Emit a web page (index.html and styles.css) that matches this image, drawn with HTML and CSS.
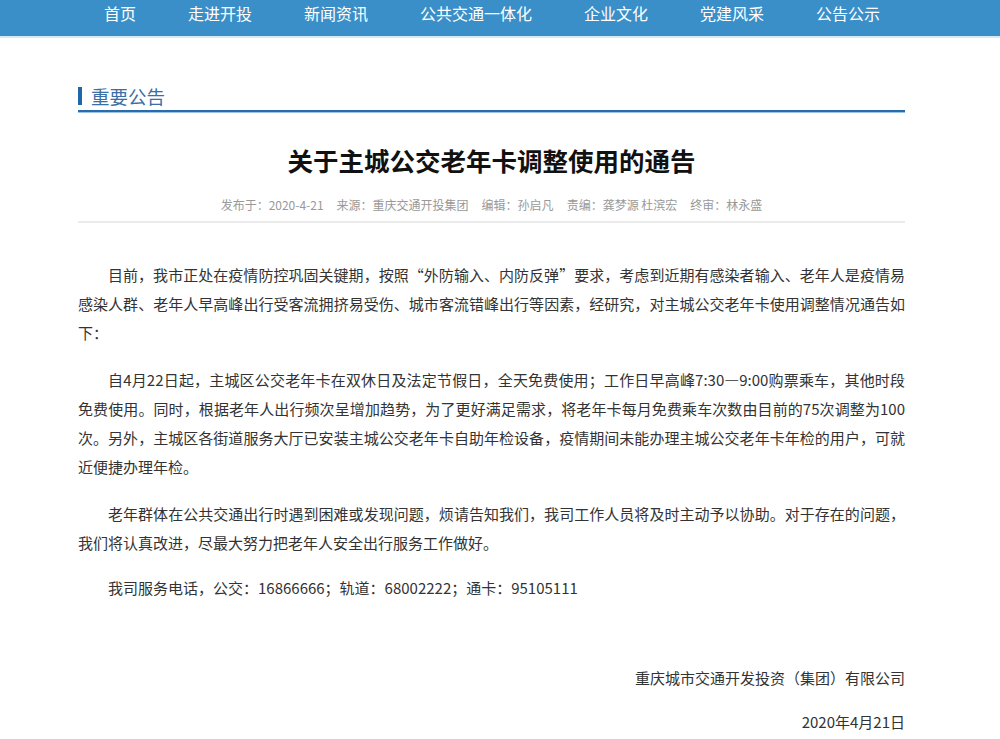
FILE: index.html
```html
<!DOCTYPE html>
<html lang="zh-CN">
<head>
<meta charset="utf-8">
<title>关于主城公交老年卡调整使用的通告</title>
<link rel="stylesheet" href="styles.css">
</head>
<body>
<header class="nav">
  <ul class="nav-list">
    <li>首页</li>
    <li>走进开投</li>
    <li>新闻资讯</li>
    <li>公共交通一体化</li>
    <li>企业文化</li>
    <li>党建风采</li>
    <li>公告公示</li>
  </ul>
</header>
<main class="page">
  <h2 class="section-title"><span class="bar"></span>重要公告</h2>
  <h1 class="title">关于主城公交老年卡调整使用的通告</h1>
  <div class="meta">
    <span>发布于：2020-4-21</span>
    <span>来源：重庆交通开投集团</span>
    <span>编辑：孙启凡</span>
    <span>责编：龚梦源 杜滨宏</span>
    <span>终审：林永盛</span>
  </div>
  <article class="content">
    <p>目前，我市正处在疫情防控巩固关键期，按照“外防输入、内防反弹”要求，考虑到近期有感染者输入、老年人是疫情易感染人群、老年人早高峰出行受客流拥挤易受伤、城市客流错峰出行等因素，经研究，对主城公交老年卡使用调整情况通告如下：</p>
    <p>自4月22日起，主城区公交老年卡在双休日及法定节假日，全天免费使用；工作日早高峰7:30—9:00购票乘车，其他时段免费使用。同时，根据老年人出行频次呈增加趋势，为了更好满足需求，将老年卡每月免费乘车次数由目前的75次调整为100次。另外，主城区各街道服务大厅已安装主城公交老年卡自助年检设备，疫情期间未能办理主城公交老年卡年检的用户，可就近便捷办理年检。</p>
    <p>老年群体在公共交通出行时遇到困难或发现问题，烦请告知我们，我司工作人员将及时主动予以协助。对于存在的问题，我们将认真改进，尽最大努力把老年人安全出行服务工作做好。</p>
    <p class="last">我司服务电话，公交：16866666；轨道：68002222；通卡：95105111</p>
    <p class="sign">重庆城市交通开发投资（集团）有限公司</p>
    <p class="date">2020年4月21日</p>
  </article>
</main>
</body>
</html>
```

FILE: styles.css
```css
* { box-sizing: border-box; }
html, body {
  margin: 0;
  padding: 0;
  background: #fff;
  font-family: "Noto Sans CJK SC", "Noto Sans", sans-serif;
  color: #333;
}
.nav {
  background: #3a8fc8;
  height: 38px;
  border-bottom: 2px solid #d5ecf7;
}
.nav-list {
  list-style: none;
  margin: 0 0 0 78px;
  padding: 0 0 0 26px;
  width: 827px;
  display: flex;
  gap: 52px;
}
.nav-list li {
  color: #fff;
  font-size: 16px;
  line-height: 26px;
  white-space: nowrap;
}
.page {
  width: 827px;
  margin-left: 78px;
}
.section-title {
  margin: 46px 0 0;
  font-size: 18.5px;
  font-weight: normal;
  line-height: 24px;
  color: #3a6ea5;
  display: flex;
  align-items: center;
  gap: 9px;
  padding-bottom: 2px;
  border-bottom: 2px solid #2a6cab;
  box-shadow: 0 1px 0 #9cc3e3;
}
.bar {
  display: block;
  width: 4px;
  height: 18px;
  background: #1f67a6;
}
.title {
  margin: 30px 0 0;
  text-align: center;
  font-size: 25.5px;
  line-height: 36px;
  font-weight: bold;
  color: #111;
}
.meta {
  margin-top: 17px;
  display: flex;
  justify-content: center;
  gap: 13px;
  font-size: 12px;
  line-height: 20px;
  color: #999;
  padding-bottom: 6px;
  border-bottom: 2px solid #ebebeb;
}
.content {
  padding-top: 37px;
}
.content p {
  margin: 0 0 18px;
  font-size: 15px;
  line-height: 29px;
  text-indent: 2em;
  text-align: justify;
}
.content p.last { margin-top: -2px; margin-bottom: 0; }
.content p.sign {
  margin: 61px 0 0;
  text-indent: 0;
  text-align: right;
}
.content p.date {
  margin: 15px 0 0;
  text-indent: 0;
  text-align: right;
}
```
